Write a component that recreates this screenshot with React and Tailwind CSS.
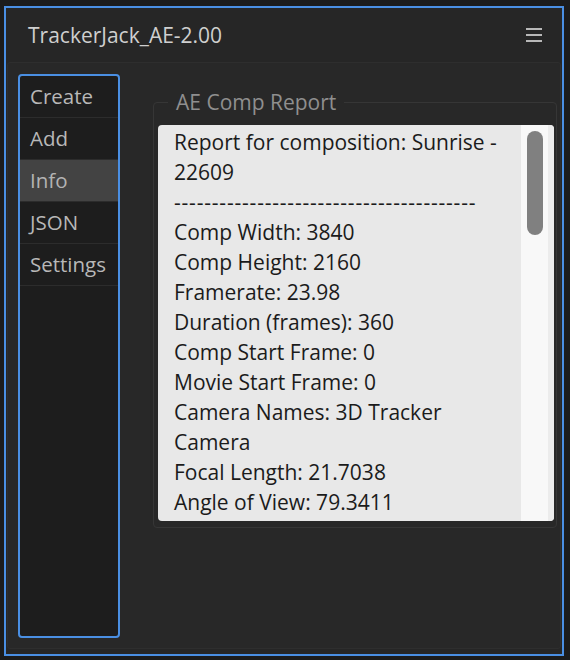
const navItems = ['Create', 'Add', 'Info', 'JSON', 'Settings'];

const reportLines = [
  'Report for composition: Sunrise -',
  '22609',
  '----------------------------------------',
  'Comp Width: 3840',
  'Comp Height: 2160',
  'Framerate: 23.98',
  'Duration (frames): 360',
  'Comp Start Frame: 0',
  'Movie Start Frame: 0',
  'Camera Names: 3D Tracker',
  'Camera',
  'Focal Length: 21.7038',
  'Angle of View: 79.3411',
  'Zoom (pixels): 2290.1445 (at 3840)',
];

const App = () => {
  return (
    <div
      className="w-[570px] h-[660px] bg-[#1c1c1c] pl-[4px] pt-[6px] overflow-hidden"
      style={{ fontFamily: '"Open Sans", "Noto Sans", sans-serif' }}
    >
      <div className="w-[560px] h-[650px] border-2 border-[#4a8fe3] bg-[#262626] flex flex-col">
        <div className="h-[54px] shrink-0 flex items-center justify-between pl-[22px] pr-[20px]">
          <span className="text-[21px] text-[#cfcfcf] leading-none">TrackerJack_AE-2.00</span>
          <div className="flex flex-col gap-[4px]">
            <div className="w-[16px] h-[2px] bg-[#b8b8b8]" />
            <div className="w-[16px] h-[2px] bg-[#b8b8b8]" />
            <div className="w-[16px] h-[2px] bg-[#b8b8b8]" />
          </div>
        </div>

        <div className="flex-1 mx-px mb-[5px] bg-[#282828] border border-[#2e2e2e] rounded-[3px] flex pl-[10px] pt-[11px] pb-[9px]">
          <div className="w-[102px] h-[564px] border-2 border-[#4a8fe3] rounded-[4px] bg-[#1d1d1d] flex flex-col shrink-0">
            {navItems.map((item) => (
              <div
                key={item}
                className={
                  'h-[42px] flex items-center pl-[10px] border-b border-[#2c2c2c] text-[20.5px] ' +
                  (item === 'Info' ? 'bg-[#434343] text-[#b3b3b3]' : 'text-[#b8b8b8]')
                }
              >
                {item}
              </div>
            ))}
          </div>

          <fieldset className="ml-[33px] mt-[16px] w-[404px] h-[438px] border border-[#363636] rounded-[4px] pl-[4px] pr-[2px] pb-[4px] flex flex-col">
            <legend className="ml-[10px] px-[8px] text-[21px] text-[#8f8f8f] leading-[24px]">AE Comp Report</legend>
            <div className="mt-[11px] h-[396px] bg-[#e8e8e8] rounded-[4px] flex overflow-hidden">
              <div className="flex-1 pl-[16px] pt-[2px] text-[21px] leading-[30px] text-[#1b1b1b] overflow-hidden">
                {reportLines.map((line, i) => (
                  <div key={i} className={'whitespace-nowrap' + (i === 2 ? ' tracking-[0.8px]' : '')}>
                    {line}
                  </div>
                ))}
              </div>
              <div className="w-[27px] bg-[#f8f8f8] pt-[6px] flex justify-center shrink-0">
                <div className="w-[16px] h-[104px] rounded-full bg-[#808080]" />
              </div>
              <div className="w-[6px] bg-[#ececec] shrink-0" />
            </div>
          </fieldset>
        </div>
      </div>
    </div>
  );
};

export default App;
